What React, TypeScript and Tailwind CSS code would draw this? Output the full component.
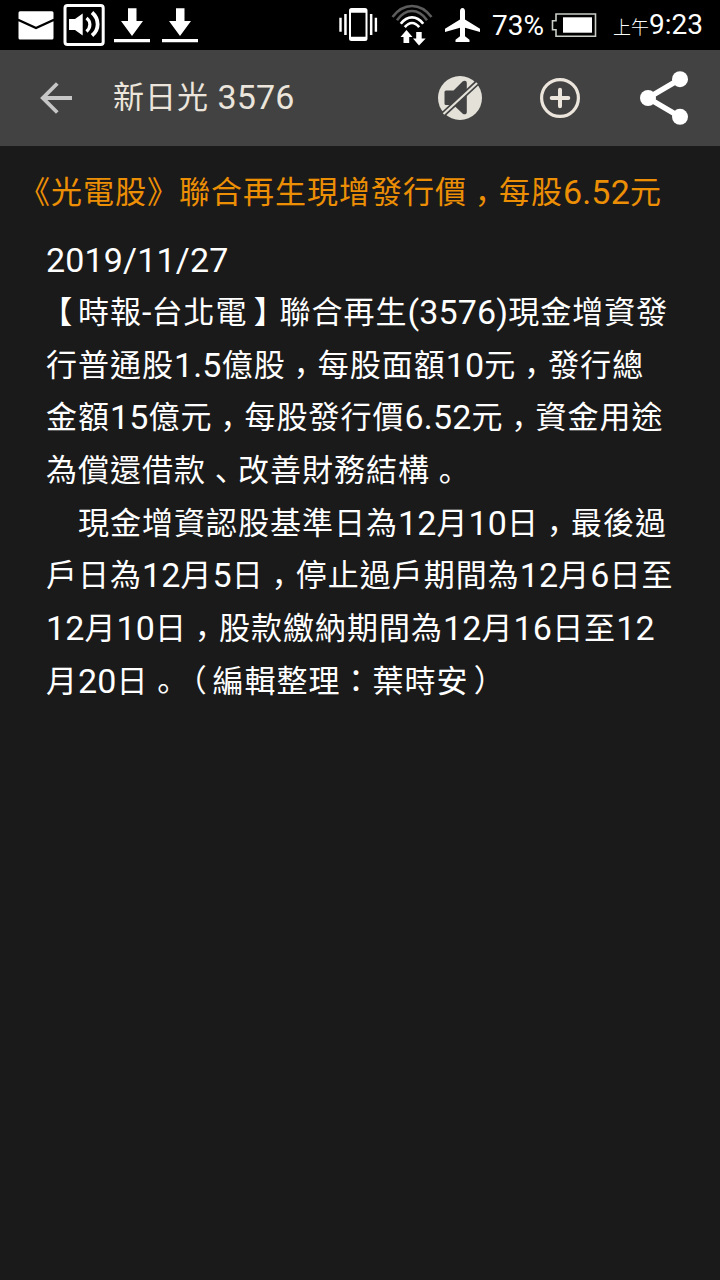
import React from 'react';

type Tone = 'title' | 'body' | 'bar';

const CJK_SHIFT: Record<Tone, string> = {
  title: 'align-[1px]',
  body: 'align-[1.5px]',
  bar: 'align-[1px]',
};

// Half-width punctuation centred in a full-width cell
const MARKS: Record<string, string> = {
  '，': 'pr-px',
  '。': 'pl-px',
  '、': 'pl-px',
  '【': 'pl-[5px]',
  '】': 'pr-[4px]',
  '（': 'pl-[5px]',
  '）': 'pr-[6px]',
};

const TITLE = '《光電股》聯合再生現增發行價，每股6.52元';

const LINES = [
  '2019/11/27',
  '【時報-台北電】聯合再生(3576)現金增資發',
  '行普通股1.5億股，每股面額10元，發行總',
  '金額15億元，每股發行價6.52元，資金用途',
  '為償還借款、改善財務結構。',
  '\u3000現金增資認股基準日為12月10日，最後過',
  '戶日為12月5日，停止過戶期間為12月6日至',
  '12月10日，股款繳納期間為12月16日至12',
  '月20日。（編輯整理：葉時安）',
];

function MixedText({ text, tone }: { text: string; tone: Tone }) {
  const runs = text.match(/[\x20-\x7e]+|[，。、【】（）]|[^\x20-\x7e，。、【】（）]+/g) ?? [];

  return (
    <>
      {runs.map((run, i) => {
        if (run in MARKS) {
          return (
            <span
              key={i}
              className={`inline-block w-8 text-center text-[31px] leading-none font-['Noto_Sans_CJK_SC',sans-serif] [font-feature-settings:'halt'] ${CJK_SHIFT[tone]} ${MARKS[run]}`}
            >
              {run}
            </span>
          );
        }
        if (/^[\x20-\x7e]/.test(run)) {
          return (
            <span key={i} className="tracking-[0.15px]">
              {run}
            </span>
          );
        }
        return (
          <span
            key={i}
            className={`text-[31px] leading-none tracking-[1px] font-['Noto_Sans_CJK_TC',sans-serif] ${CJK_SHIFT[tone]}`}
          >
            {run}
          </span>
        );
      })}
    </>
  );
}

function DownloadIcon() {
  return (
    <svg className="h-[50px] w-9" viewBox="0 0 36 50" fill="#fff">
      <path d="M14 8.3h8.500V21H29L18 36 7 21h7z" />
      <path d="M0 39h36v3.300H0z" />
    </svg>
  );
}

function StatusBar() {
  return (
    <div className="flex h-[50px] items-center bg-black text-white">
      {/* Notifications */}
      <svg className="ml-[18px] h-[50px] w-9" viewBox="0 0 36 50" fill="#fff">
        <path d="M2 11.300h32a1.500 1.500 0 0 1 1.500 1.500v6L18 26.700.5 18.800v-6A1.500 1.500 0 0 1 2 11.300z" />
        <path d="M.5 21.200 18 29.200l17.500-8V38a1.500 1.500 0 0 1-1.500 1.500H2A1.500 1.500 0 0 1 .5 38z" />
      </svg>
      <svg className="ml-[9px] h-[50px] w-[42px]" viewBox="0 0 42 50" fill="none" stroke="#fff">
        <rect x="2" y="5.500" width="38.200" height="39" rx="2.500" strokeWidth="3" />
        <path d="M6 19h6l7.700-5.500V35.500L12 30H6z" fill="#fff" stroke="none" />
        <path d="M23.500 18c4.500 3.500 4.500 9.500 0 13.500" strokeWidth="3.200" />
        <path d="M29 12.500c7.500 6.500 7.500 17 0 23" strokeWidth="3.800" />
      </svg>
      <div className="ml-[9px] flex gap-3">
        <DownloadIcon />
        <DownloadIcon />
      </div>

      {/* System state */}
      <svg className="ml-[141px] h-[50px] w-10" viewBox="0 0 40 50" fill="#fff">
        <path
          fillRule="evenodd"
          d="M12.500 8h13.500a2.500 2.500 0 0 1 2.500 2.500v28a2.500 2.500 0 0 1-2.500 2.500H12.500a2.500 2.500 0 0 1-2.500-2.500v-28A2.500 2.500 0 0 1 12.500 8zM12 12.700v24h14.500v-24z"
        />
        <path d="M5.200 14h2.500v21H5.200zM.3 17.700h2.400v14H.3zM30.900 14h2.500v21h-2.500zM35.700 17.700h2.400v14h-2.400z" />
      </svg>
      <svg className="ml-[12px] h-[50px] w-[42px]" viewBox="0 0 42 50" fill="none">
        <g stroke="#5c5c5c" strokeWidth="2.600">
          <path d="M1.500 17c11-14.700 28-14.700 39 0" />
          <path d="M6 20.300c8.500-12.300 21.500-12.300 30 0" />
        </g>
        <g stroke="#fff" strokeWidth="2.700">
          <path d="M9.800 23.800c6.500-8.500 15.900-8.500 22.400 0" />
          <path d="M13.800 27.200c4.500-5.600 9.900-5.600 14.400 0" />
        </g>
        <path
          d="M15.500 30l6 7h-3.300v6h-5.700v-6H9.500zM25.200 32h5.500v6.500h4L28 45.500l-6-7h3.200z"
          fill="#fff"
        />
      </svg>
      <svg className="ml-[12px] h-[50px] w-9" viewBox="0 0 36 50" fill="#fff">
        <path d="M17.500 8c1.700 0 2.500 1.500 2.500 3.200v8.300l15 9.200V32l-15-4.200v8.400l4.500 3.600V42h-14v-2.200l4.500-3.600v-8.400L0 32v-3.300l15-9.200v-8.300C15 9.500 15.800 8 17.500 8z" />
      </svg>
      <span className="ml-[11px] w-[53px] font-[Roboto,sans-serif] text-[28px] leading-[50px] whitespace-nowrap">
        <span className="align-[-1px]">73%</span>
      </span>
      <svg className="ml-[6px] h-[50px] w-[46px]" viewBox="0 0 46 50" fill="none">
        <path d="M5 14h39.500v22.300H5v-6.500H1.500v-9H5z" stroke="#c9cec6" strokeWidth="1.600" />
        <path d="M12 17.300h29v15.400H12z" fill="#fff" />
      </svg>
      <div className="ml-[16px] flex items-baseline leading-[50px] whitespace-nowrap">
        <span className="font-['Noto_Sans_CJK_TC',sans-serif] text-[18px] leading-none font-light">上午</span>
        <span className="font-[Roboto,sans-serif] text-[28px]">9:23</span>
      </div>
    </div>
  );
}

function AppBar() {
  return (
    <div className="flex h-24 items-center bg-[#424242] text-[#ebe5dc]">
      <svg className="ml-10 h-8 w-8" viewBox="0 0 32 32" fill="none" stroke="#c6c6c6" strokeWidth="3.800">
        <path d="M32 16H3M17.300 1.500 2.800 16l14.500 14.500" />
      </svg>
      <h1 className="ml-[41px] h-[97px] w-[324px] font-[Roboto,sans-serif] text-[34px] leading-[95px] whitespace-nowrap">
        <MixedText text="新日光 3576" tone="bar" />
      </h1>
      <svg className="h-[46px] w-[46px]" viewBox="0 0 46 46">
        <circle cx="23" cy="23" r="22" fill="#e4e1d9" />
        <path
          d="M9 15.500h7.500L25.500 6.500c2-1.500 4.300-1 4.300 1.500v29c0 2.500-2.300 3-4.300 1.500L16.500 30H9a1.500 1.500 0 0 1-1.500-1.500V17A1.500 1.500 0 0 1 9 15.500z"
          fill="#424242"
        />
        <path d="M5 40.500 41.500 6.500" stroke="#424242" strokeWidth="5.400" />
        <path d="M6.500 39 40 8" stroke="#e4e1d9" strokeWidth="2.200" />
      </svg>
      <svg className="ml-[57px] h-10 w-10" viewBox="0 0 40 40" fill="none" stroke="#ebe5dc">
        <circle cx="20" cy="20" r="18.400" strokeWidth="3.200" />
        <path d="M20 11.700v16.600M11.700 20h16.600" strokeWidth="4" strokeLinecap="round" />
      </svg>
      <svg className="ml-[60px] h-[54px] w-12" viewBox="0 0 48 54" fill="#fff">
        <path d="M40 8.200 8 27l32 18.800" fill="none" stroke="#fff" strokeWidth="5.500" />
        <circle cx="40" cy="8.200" r="8" />
        <circle cx="8" cy="27" r="8" />
        <circle cx="40" cy="45.800" r="8" />
      </svg>
    </div>
  );
}

export default function App() {
  return (
    <div className="flex h-[1280px] w-[720px] flex-col overflow-hidden bg-[#1a1a1a]">
      <StatusBar />
      <AppBar />
      <main className="font-[Roboto,sans-serif] text-[34px] whitespace-nowrap">
        <h2 className="mt-[20px] h-[52px] pl-[19px] leading-[52px] text-[#ec8f05]">
          <MixedText text={TITLE} tone="title" />
        </h2>
        <div className="mt-[15.5px] pl-[46px] leading-[52.65px] text-white">
          {LINES.map((line) => (
            <p key={line} className="h-[52.65px]">
              <MixedText text={line} tone="body" />
            </p>
          ))}
        </div>
      </main>
    </div>
  );
}
